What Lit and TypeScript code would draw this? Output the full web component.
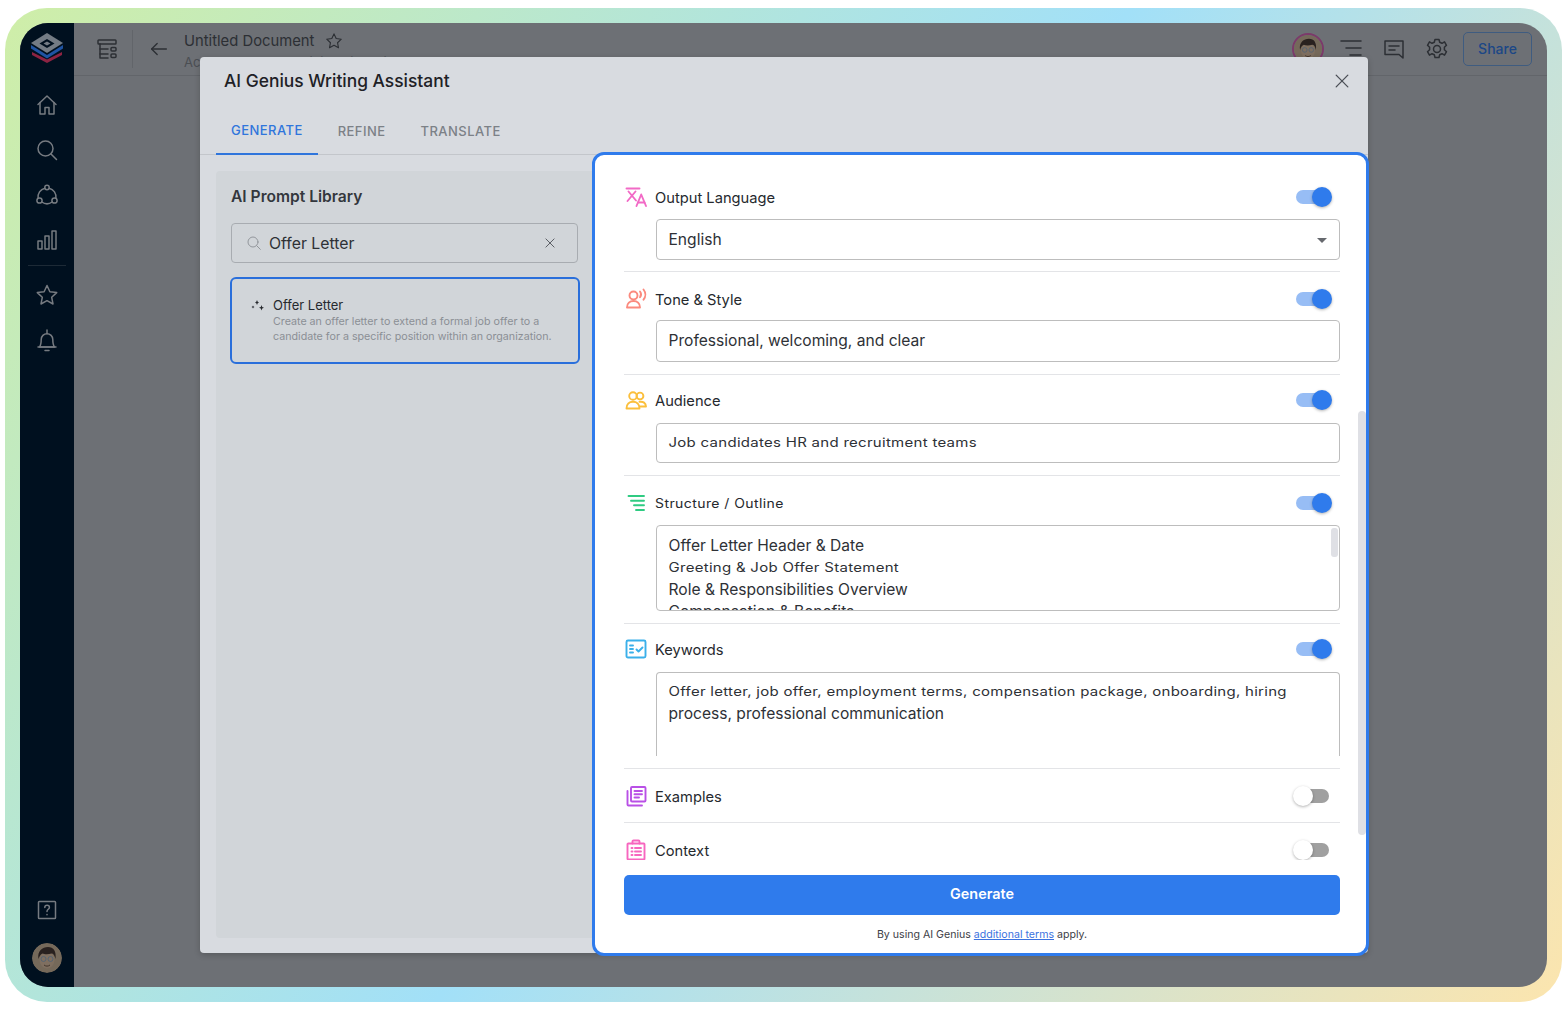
import { LitElement, css, html, svg } from "lit";
import { customElement } from "lit/decorators.js";

const icon = (body: unknown, size = 24, box = 24, stroke = 1.5) => html`<svg
  width=${size}
  height=${size}
  viewBox="0 0 ${box} ${box}"
  fill="none"
  stroke="currentColor"
  stroke-width=${stroke}
  stroke-linecap="round"
  stroke-linejoin="round"
>${body}</svg>`;

const icons = {
  home: svg`<path d="M3 11.500 12 3l9 8.500"/><path d="M5 9.500V21h5v-6.500h4V21h5V9.500"/>`,
  search: svg`<circle cx="10.500" cy="10.500" r="7.500"/><path d="m16 16 5.500 5.500"/>`,
  network: svg`<circle cx="12" cy="4.500" r="2.200"/><circle cx="4.500" cy="17.500" r="2.600"/><circle cx="19.500" cy="17.500" r="2.600"/><path d="M9.900 5.200A9 9 0 0 0 3.100 15.300"/><path d="M14.100 5.200a9 9 0 0 1 6.800 10.100"/><path d="M6.800 19c3.200 2.300 7.200 2.300 10.400 0"/>`,
  chart: svg`<rect x="3" y="13" width="4" height="8"/><rect x="10" y="8" width="4" height="13"/><rect x="17" y="3" width="4" height="18"/>`,
  star: svg`<path d="m12 2.500 2.900 6.200 6.800.9-5 4.700 1.300 6.700-6-3.300-6 3.300 1.300-6.700-5-4.700 6.800-.9z"/>`,
  bell: svg`<path d="M4.500 19c1.200-1.500 1.700-3 1.700-7.500a5.800 5.800 0 0 1 11.600 0c0 4.500.5 6 1.700 7.500z"/><path d="M3 19h18"/><path d="M12 2v3.500"/><path d="M10 22.500h4"/>`,
  help: svg`<rect x="3.500" y="3.500" width="17" height="17" rx=".8"/><path d="M9.800 9.500c0-1.400 1-2.200 2.300-2.200s2.300.9 2.300 2.100c0 1.900-2.400 1.900-2.400 4"/><path d="M12 16.500v.3"/>`,
  panel: svg`<rect x="3" y="3" width="18" height="4" rx=".8"/><path d="M5 7v14h8"/><path d="M5 12h8"/><path d="M5 17h8"/><rect x="16" y="10.500" width="5" height="3.500" rx="1"/><rect x="16" y="17" width="5" height="3.500" rx="1"/>`,
  back: svg`<path d="M20 12H4"/><path d="m10 6-6 6 6 6"/>`,
  lines: svg`<path d="M2 4h20"/><path d="M7 11h15"/><path d="M11 18h11"/>`,
  comment: svg`<path d="M3 4h18v17l-4-3.500H3z"/><path d="M7 9h10"/><path d="M7 13h6"/>`,
  gear: svg`<path d="m10 2.500h4l.7 2.800 2.300 1 2.500-1.400 2 3.400-2.100 2v2.400l2.100 2-2 3.400-2.500-1.400-2.300 1-.7 2.800h-4l-.7-2.800-2.300-1-2.500 1.400-2-3.400 2.100-2v-2.400l-2.100-2 2-3.400 2.500 1.400 2.300-1z"/><circle cx="12" cy="12" r="3.500"/>`,
  close: svg`<path d="m5 5 14 14"/><path d="M19 5 5 19"/>`,
  translate: svg`<path d="M1.500 2.500h13"/><path d="m3.500 5.500 7.500 9"/><path d="m10.500 5.500-8 9.500"/><path d="m11.500 20 4.700-11.500L21 20"/><path d="M13 16.500h6.500"/>`,
  tone: svg`<circle cx="8.500" cy="7.500" r="4"/><path d="M2 19.500c0-4 2.800-6.500 6.500-6.500s6.500 2.500 6.500 6.500z"/><path d="M15 3.500c1.300 1.700 1.300 4 0 5.800"/><path d="M18.500 1.500c2.400 3 2.400 7.200 0 10.200"/>`,
  audience: svg`<circle cx="8" cy="7" r="3.800"/><path d="M1.500 19.500c0-4.400 2.800-6.700 6.500-6.700s6.500 2.300 6.500 6.700z"/><circle cx="15" cy="7" r="3.400"/><path d="M14.500 12.800c3.700-.6 6.300 1.200 6.500 4.700h-6"/>`,
  structure: svg`<path d="M3.500 4H19"/><path d="M6 8.700h13"/><path d="M9 13.300h10"/><path d="M11 18h8"/>`,
  keywords: svg`<rect x="1.500" y="2.500" width="19" height="17" rx="1.500"/><path d="M5 7.500h3"/><path d="M5 11h3"/><path d="M5 14.500h3"/><path d="m11.500 11.500 2 2 4-4"/>`,
  examples: svg`<rect x="6" y="2" width="14.500" height="14.500" rx="1"/><path d="M9.500 6h7.500"/><path d="M9.500 9.300h7.500"/><path d="M9.500 12.500h4.500"/><path d="M2.500 6v13.500a1 1 0 0 0 1 1H17"/>`,
  context: svg`<rect x="2.500" y="4.500" width="17" height="16" rx=".8"/><path d="M7.500 4.500V2.500a1 1 0 0 1 1-1h5a1 1 0 0 1 1 1v2"/><path d="M6.500 9h1"/><path d="M10 9h6"/><path d="M6.500 12.500h1"/><path d="M10 12.500h6"/><path d="M6.500 16h1"/><path d="M10 16h6"/>`,
};

const avatar = (size: number) => html`<svg width=${size} height=${size} viewBox="0 0 30 30">
  <circle cx="15" cy="15" r="15" fill="#75695a" />
  <ellipse cx="15" cy="17" rx="7.500" ry="8.500" fill="#7f6f60" />
  <path d="M6.500 16c-1.500-8 4-12 9.500-12s8.500 4 7.500 12c-.8-3.500-2-5.500-4-5.500-3 1-7 1-9 0-2 1-3 2.500-4 5.500z" fill="#29211f" />
  <g fill="none" stroke="#566472" stroke-width="1">
    <circle cx="11.500" cy="16" r="2.500" />
    <circle cx="18.500" cy="16" r="2.500" />
  </g>
  <path d="M12 22c2 1.500 4 1.500 6 0" fill="none" stroke="#43352c" />
</svg>`;

type Field = { kind: "select" | "input" | "flat" | "outline" | "keywords"; height: number };

const sections: {
  label: string;
  icon: unknown;
  color: string;
  on: boolean;
  top: number;
  gap: number;
  bottom: number;
  flat?: boolean;
  field?: Field;
  value?: string;
}[] = [
  { label: "Output Language", icon: icons.translate, color: "#f26ac6", on: true, top: 30, gap: 10, bottom: 11, field: { kind: "select", height: 41 }, value: "English" },
  { label: "Tone & Style", icon: icons.tone, color: "#fb8a7e", on: true, top: 15, gap: 9, bottom: 12, field: { kind: "input", height: 42 }, value: "Professional, welcoming, and clear" },
  { label: "Audience", icon: icons.audience, color: "#fbbf3c", on: true, top: 13, gap: 11, bottom: 12, field: { kind: "flat", height: 40 }, value: "Job candidates HR and recruitment teams" },
  { label: "Structure / Outline", icon: icons.structure, color: "#2fcb82", on: true, top: 15, gap: 10, bottom: 12, flat: true, field: { kind: "outline", height: 86 } },
  { label: "Keywords", icon: icons.keywords, color: "#3ab0ea", on: true, top: 13, gap: 11, bottom: 12, field: { kind: "keywords", height: 84 } },
  { label: "Examples", icon: icons.examples, color: "#b950e6", on: false, top: 15, gap: 0, bottom: 14 },
  { label: "Context", icon: icons.context, color: "#f766bf", on: false, top: 15, gap: 0, bottom: 0 },
];

@customElement("app-root")
export class AppRoot extends LitElement {
  static styles = css`
    :host {
      display: block;
      width: 1567px;
      height: 1010px;
      background: #fff;
      font-family: Inter, "Noto Sans", sans-serif;
      color: #26292e;
      overflow: hidden;
    }
    * {
      box-sizing: border-box;
    }
    svg {
      display: block;
      flex: none;
    }
    .frame {
      width: 1557px;
      height: 994px;
      margin: 8px 0 0 5px;
      padding: 15px;
      border-radius: 42px;
      background: linear-gradient(125deg, #cfeea8 0%, #a2e0f8 50%, #fce5ae 100%);
    }
    .screen {
      position: relative;
      display: flex;
      height: 100%;
      border-radius: 28px;
      overflow: hidden;
      background: #6d7075;
    }
    .rail {
      width: 54px;
      flex: none;
      display: flex;
      flex-direction: column;
      align-items: center;
      padding: 9px 0 14px;
      background: #00101f;
      color: #767b81;
    }
    .rail .logo {
      margin-bottom: 29px;
    }
    .rail .group {
      display: flex;
      flex-direction: column;
      gap: 21px;
    }
    .rail hr {
      width: 38px;
      height: 1px;
      margin: 13px 0 17px;
      border: 0;
      background: #1d2a36;
    }
    .rail .spacer {
      flex: 1;
    }
    .rail .help {
      margin-bottom: 21px;
    }
    .rail .me {
      border-radius: 50%;
      overflow: hidden;
    }
    .main {
      flex: 1;
    }
    .topbar {
      display: flex;
      align-items: center;
      height: 53px;
      padding: 0 15px 0 21px;
      border-bottom: 1px solid #62656a;
      color: #2c2f34;
    }
    .topbar .sep {
      width: 1px;
      height: 38px;
      margin: 0 15px 0 13px;
      background: #62656a;
    }
    .doc {
      margin-left: 14px;
      flex: 1;
      padding-top: 3px;
    }
    .doc .title {
      display: flex;
      align-items: center;
      gap: 11px;
      font-size: 14.8px;
      line-height: 22px;
    }
    .doc .sub {
      font-size: 13px;
      line-height: 20px;
      color: #4b4e53;
    }
    .top-avatar {
      border: 2px solid #7c3a6a;
      border-radius: 50%;
      overflow: hidden;
      margin-right: 15px;
    }
    .topbar .tools {
      display: flex;
      align-items: center;
      gap: 19px;
      margin-right: 14px;
    }
    .share {
      width: 69px;
      height: 34px;
      display: flex;
      align-items: center;
      justify-content: center;
      padding-bottom: 2px;
      border: 1px solid #3f5c80;
      border-radius: 5px;
      font-size: 14px;
      font-weight: 500;
      color: #1c4786;
    }
    .modal {
      position: absolute;
      left: 180px;
      top: 34px;
      width: 1168px;
      height: 896px;
      display: flex;
      flex-direction: column;
      background: #d8dbe0;
      border-radius: 4px;
      box-shadow: 0 2px 6px rgba(0, 0, 0, 0.2);
    }
    .modal-head {
      height: 51px;
      display: flex;
      align-items: center;
      justify-content: space-between;
      padding: 0 16px 4px 24px;
      font-size: 17.4px;
      font-weight: 500;
      color: #1e2126;
    }
    .modal-head svg {
      color: #4a4e55;
    }
    .tabs {
      display: flex;
      height: 47px;
      padding-left: 16px;
      border-bottom: 1px solid #c3c6cb;
    }
    .tab {
      display: flex;
      align-items: center;
      padding: 0 15px 2px;
      height: 47px;
      margin-right: 5px;
      font-size: 13px;
      font-weight: 500;
      letter-spacing: 0.45px;
      color: #7c8187;
    }
    .tab.active {
      color: #2f75dc;
      border-bottom: 2px solid #2f75dc;
    }
    .body {
      flex: 1;
      display: flex;
      min-height: 0;
    }
    .library {
      width: 392px;
      flex: none;
      padding: 16px 0 15px 16px;
    }
    .library-box {
      height: 100%;
      padding: 15px 12px 0 15px;
      background: #d1d5d9;
      border-radius: 4px 0 0 4px;
    }
    .library h2 {
      margin: 0 0 15px;
      font-size: 15.6px;
      line-height: 22px;
      font-weight: 600;
      color: #33373d;
    }
    .search {
      display: flex;
      align-items: center;
      width: 347px;
      height: 40px;
      padding: 0 20px 0 14px;
      border: 1px solid #a8acb1;
      border-radius: 4px;
      font-size: 15.8px;
      color: #2e3136;
    }
    .search .glass {
      color: #92969b;
      margin-right: 7px;
    }
    .search span {
      flex: 1;
    }
    .search .clear {
      color: #4a4e55;
    }
    .card {
      display: flex;
      gap: 8px;
      width: 350px;
      height: 87px;
      margin: 14px 0 0 -1px;
      padding: 18px 12px 0 19px;
      border: 2px solid #2a6fdb;
      border-radius: 6px;
    }
    .card .spark {
      margin-top: 2px;
    }
    .card h3 {
      margin: 0 0 1px;
      font-size: 13px;
      line-height: 16px;
      font-weight: 400;
      color: #26292e;
    }
    .card p {
      margin: 0;
      font-size: 10.7px;
      line-height: 15px;
      color: #8b8f95;
    }
    .panel {
      position: relative;
      flex: 1;
      margin: -3px -1px -3px 0;
      border: 3px solid #2f7bec;
      border-radius: 12px;
      background: #fff;
      display: flex;
      flex-direction: column;
      min-width: 0;
    }
    .scroll {
      height: 705px;
      flex: none;
      padding: 0 26px 0 29px;
      overflow: hidden;
    }
    .bar {
      position: absolute;
      right: 0;
      top: 256px;
      width: 8px;
      height: 424px;
      border-radius: 4px;
      background: #dfe0e5;
    }
    .section + .section {
      border-top: 1px solid #e3e4e7;
    }
    .head {
      display: flex;
      align-items: center;
      gap: 8px;
      height: 24px;
      font-size: 14.7px;
    }
    .head .glyph {
      padding-left: 1px;
    }
    .head .name {
      flex: 1;
      padding-top: 2px;
    }
    .head .name.flat-name {
      padding-top: 0;
      font-size: 14px;
      letter-spacing: 0.42px;
    }
    .head .name.flat-name span {
      display: inline-block;
      transform: scaleY(0.9);
    }
    .toggle {
      position: relative;
      width: 36px;
      height: 20px;
      margin-right: 8px;
    }
    .toggle::before {
      content: "";
      position: absolute;
      left: 0;
      right: 3px;
      top: 3px;
      height: 14px;
      border-radius: 7px;
      background: #97bdf5;
    }
    .toggle::after {
      content: "";
      position: absolute;
      right: 0;
      top: 0;
      width: 20px;
      height: 20px;
      border-radius: 50%;
      background: #2f7bec;
      box-shadow: 0 1px 3px rgba(0, 0, 0, 0.3);
    }
    .toggle.off {
      margin-right: 11px;
    }
    .toggle.off::before {
      background: #a0a0a0;
      left: 3px;
      right: 0;
    }
    .toggle.off::after {
      right: auto;
      left: 0;
      background: #fff;
    }
    .field {
      position: relative;
      margin-left: 32px;
      border: 1px solid #bdbdbd;
      border-radius: 4px;
      padding: 0 11.5px;
      font-size: 15.6px;
      color: #2e3136;
      overflow: hidden;
    }
    .field.line {
      display: flex;
      align-items: center;
      padding-bottom: 1px;
    }
    .field.flatline {
      padding-bottom: 2px;
    }
    .field.outline {
      padding-top: 9px;
      line-height: 22px;
    }
    .field.keywords {
      padding-top: 8px;
      line-height: 22px;
      border-bottom: 0;
      border-radius: 4px 4px 0 0;
    }
    .flat {
      display: block;
      width: max-content;
      font-size: 15px;
      letter-spacing: 0.28px;
      transform: scaleY(0.84);
    }
    .clipped {
      white-space: nowrap;
    }
    .caret {
      position: absolute;
      right: 12px;
      top: 18px;
      border-left: 5px solid transparent;
      border-right: 5px solid transparent;
      border-top: 5px solid #66696e;
    }
    .thumb {
      position: absolute;
      right: 1px;
      top: 2px;
      width: 7px;
      height: 29px;
      border-radius: 3px;
      background: #dfe0e5;
    }
    .foot {
      padding: 15px 26px 0 29px;
    }
    .generate {
      height: 40px;
      display: flex;
      align-items: center;
      justify-content: center;
      padding-bottom: 3px;
      border-radius: 5px;
      background: #2f7bec;
      color: #fff;
      font-size: 14.4px;
      font-weight: 600;
    }
    .terms {
      margin-top: 12px;
      text-align: center;
      font-size: 10.6px;
      line-height: 15px;
      color: #3d4046;
    }
    .terms a {
      color: #3b72e0;
      text-decoration: underline;
    }
  `;

  renderField(s: (typeof sections)[number]) {
    const f = s.field;
    if (!f) return "";
    const style = `height:${f.height}px;margin-top:${s.gap}px`;
    if (f.kind === "select") {
      return html`<div class="field line" style=${style}>${s.value}<i class="caret"></i></div>`;
    }
    if (f.kind === "input") {
      return html`<div class="field line flatline" style=${style}>${s.value}</div>`;
    }
    if (f.kind === "flat") {
      return html`<div class="field line flatline" style=${style}><span class="flat">${s.value}</span></div>`;
    }
    if (f.kind === "outline") {
      return html`<div class="field outline" style=${style}>
        <div>Offer Letter Header &amp; Date</div>
        <span class="flat">Greeting &amp; Job Offer Statement</span>
        <div>Role &amp; Responsibilities Overview</div>
        <div class="clipped">Compensation &amp; Benefits</div>
        <i class="thumb"></i>
      </div>`;
    }
    return html`<div class="field keywords" style=${style}>
      <span class="flat">Offer letter, job offer, employment terms, compensation package, onboarding, hiring</span>
      <div>process, professional communication</div>
    </div>`;
  }

  render() {
    return html`
      <div class="frame">
        <div class="screen">
          <nav class="rail">
            <svg class="logo" width="36" height="32" viewBox="0 0 36 32">
              <path d="M18 1 34 11 18 21 2 11z" fill="#747c85" />
              <path d="M18 7 25.500 11.500 18 16 10.500 11.500z" fill="#00101f" />
              <path d="M18 9.500 21.500 11.500 18 13.500 14.500 11.500z" fill="#747c85" />
              <path d="M2 13 18 23 34 13 34 16.500 18 26.500 2 16.500z" fill="#1f54a3" />
              <path d="M3 20 18 27.500 33 20 33 23 18 31 3 23z" fill="#8d2342" />
            </svg>
            <div class="group">
              ${icon(icons.home)} ${icon(icons.search)} ${icon(icons.network)} ${icon(icons.chart)}
            </div>
            <hr />
            <div class="group">${icon(icons.star)} ${icon(icons.bell)}</div>
            <div class="spacer"></div>
            <div class="help">${icon(icons.help)}</div>
            <div class="me">${avatar(30)}</div>
          </nav>
          <div class="main">
            <header class="topbar">
              ${icon(icons.panel)}
              <div class="sep"></div>
              ${icon(icons.back, 22)}
              <div class="doc">
                <div class="title">Untitled Document ${icon(icons.star, 18)}</div>
                <div class="sub">Access Contract Training Financial Plans</div>
              </div>
              <div class="top-avatar">${avatar(28)}</div>
              <div class="tools">
                ${icon(icons.lines)} ${icon(icons.comment)} ${icon(icons.gear)}
              </div>
              <div class="share">Share</div>
            </header>
          </div>
          <section class="modal">
            <div class="modal-head">AI Genius Writing Assistant ${icon(icons.close, 20)}</div>
            <div class="tabs">
              <div class="tab active">GENERATE</div>
              <div class="tab">REFINE</div>
              <div class="tab">TRANSLATE</div>
            </div>
            <div class="body">
              <aside class="library">
                <div class="library-box">
                  <h2>AI Prompt Library</h2>
                  <div class="search">
                    <div class="glass">${icon(icons.search, 16)}</div>
                    <span>Offer Letter</span>
                    <div class="clear">${icon(icons.close, 14)}</div>
                  </div>
                  <div class="card">
                    <svg class="spark" width="14" height="14" viewBox="0 0 14 14" fill="#26292e">
                      <path d="M6 1l.7 1.800L8 3.500l-1.300.7L6 6l-.7-1.800L4 3.500l1.300-.7z" />
                      <path d="M10.500 6l.7 2 1.800.8-1.800.7-.7 2-.7-2L8 8.800l1.800-.8z" />
                      <path d="M2 6.500l.5 1 1 .5-1 .5-.5 1-.5-1-1-.5 1-.5z" />
                    </svg>
                    <div>
                      <h3>Offer Letter</h3>
                      <p>
                        Create an offer letter to extend a formal job offer to a<br />candidate for a
                        specific position within an organization.
                      </p>
                    </div>
                  </div>
                </div>
              </aside>
              <div class="panel">
                <div class="scroll">
                  ${sections.map(
                    (s) => html`<div
                      class="section"
                      style="padding:${s.top}px 0 ${s.bottom}px"
                    >
                      <div class="head">
                        <span class="glyph" style="color:${s.color}">${icon(s.icon, 22, 22, 1.9)}</span>
                        <span class="name ${s.flat ? "flat-name" : ""}"><span>${s.label}</span></span>
                        <span class="toggle ${s.on ? "" : "off"}"></span>
                      </div>
                      ${this.renderField(s)}
                    </div>`,
                  )}
                </div>
                <i class="bar"></i>
                <div class="foot">
                  <div class="generate">Generate</div>
                  <div class="terms">
                    By using AI Genius <a>additional terms</a> apply.
                  </div>
                </div>
              </div>
            </div>
          </section>
        </div>
      </div>
    `;
  }
}
